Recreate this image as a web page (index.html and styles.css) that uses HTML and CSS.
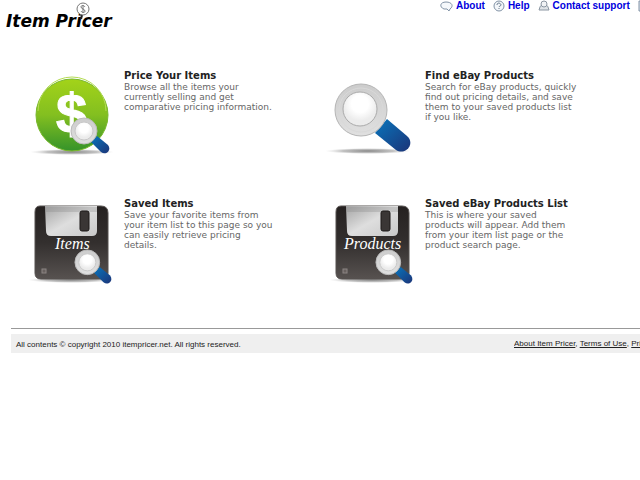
FILE: index.html
```html
<!DOCTYPE html>
<html lang="en">
<head>
    <meta charset="UTF-8">
    <meta name="viewport" content="width=device-width, initial-scale=1.0">
    <title>Item Pricer</title>
    <link rel="stylesheet" href="styles.css">
</head>
<body>
    <!-- shared gradients and symbols -->
    <svg class="defs" width="0" height="0" aria-hidden="true">
        <defs>
            <linearGradient id="green" x1="0" y1="0" x2="0" y2="1">
                <stop offset="0" stop-color="#a3d319"/>
                <stop offset=".5" stop-color="#83bf20"/>
                <stop offset="1" stop-color="#35932a"/>
            </linearGradient>
            <linearGradient id="black" x1="0" y1="0" x2="0" y2="1">
                <stop offset="0" stop-color="#252120"/>
                <stop offset=".5" stop-color="#332f2e"/>
                <stop offset="1" stop-color="#575250"/>
            </linearGradient>
            <linearGradient id="metal" x1="0" y1="0" x2="1" y2="1">
                <stop offset="0" stop-color="#a4a4a4"/>
                <stop offset=".5" stop-color="#dedede"/>
                <stop offset="1" stop-color="#c8c8c8"/>
            </linearGradient>
            <linearGradient id="blue" x1="0" y1="0" x2="1" y2="1">
                <stop offset="0" stop-color="#0876bd"/>
                <stop offset="1" stop-color="#1c3478"/>
            </linearGradient>
            <linearGradient id="ring" x1="0" y1="0" x2="0" y2="1">
                <stop offset="0" stop-color="#cccccc"/>
                <stop offset="1" stop-color="#e0e0e0"/>
            </linearGradient>
            <radialGradient id="lens" cy=".35">
                <stop offset=".5" stop-color="#ffffff"/>
                <stop offset="1" stop-color="#ececec"/>
            </radialGradient>
            <radialGradient id="shade">
                <stop offset="0" stop-color="#777" stop-opacity=".9"/>
                <stop offset=".6" stop-color="#999" stop-opacity=".6"/>
                <stop offset="1" stop-color="#ccc" stop-opacity="0"/>
            </radialGradient>
        </defs>
        <symbol id="glass" viewBox="0 0 40 40">
            <path d="M21 25l6-6 11 9c4 5-2 11-7 7z" fill="url(#blue)"/>
            <circle cx="14" cy="14" r="13" fill="url(#ring)" stroke="#bbb"/>
            <circle cx="14" cy="14" r="9" fill="url(#lens)" stroke="#c8c8c8"/>
        </symbol>
        <symbol id="disk" viewBox="0 0 100 95">
            <ellipse cx="46" cy="85" rx="43" ry="3" fill="url(#shade)"/>
            <path d="M15 11h61q7 0 7 7v60q0 6-6 6H16q-6 0-6-6V17q0-6 5-6z" fill="url(#black)" stroke="#55504e"/>
            <path d="M20 11h52v25q0 5-5 5H26q-5 0-5-5z" fill="url(#metal)"/>
            <path d="M20 12h52v5H21z" fill="#888" opacity=".3"/>
            <rect x="55" y="16" width="9" height="20" rx="2" fill="#3a3635" stroke="#1c1918"/>
            <rect x="17" y="74" width="4" height="4" fill="#68615f" stroke="#8b8583"/>
        </symbol>
    </svg>

    <div class="header">
        <a class="logo" href="#">Item Pricer
            <svg width="14" height="20" viewBox="0 0 14 20" aria-hidden="true">
                <path d="M6 14L5 18" stroke="#222" stroke-width="2"/>
                <circle cx="7" cy="8" r="6" fill="#fff" stroke="#777"/>
                <path d="M9 6C8 4 5 4 5 6s4 2 4 4-3 2-4 0M7 4v8" fill="none" stroke="#777"/>
            </svg>
        </a>
        <div class="nav">
            <a href="#">
                <svg width="13" height="12" viewBox="0 0 13 12" aria-hidden="true"><path d="M4 9C-1 7 0 2 6 2s8 4 4 7l-1 2-2-2z" fill="#f5f8fb" stroke="#8293a6"/></svg>
                About</a>
            <a href="#">
                <svg width="12" height="12" viewBox="0 0 12 12" aria-hidden="true"><circle cx="6" cy="6" r="5" fill="#f4f7fa" stroke="#8293a6"/><path d="M4 5c0-3 4-2 4 0 0 1-2 1-2 2M6 8v1" fill="none" stroke="#66788c"/></svg>
                Help</a>
            <a href="#">
                <svg width="12" height="12" viewBox="0 0 12 12" aria-hidden="true"><path d="M1 10q1-5 3-5h4q2 0 3 5z" fill="#e0e4e8" stroke="#8b96a2"/><circle cx="6" cy="4" r="3" fill="#f1f3f5" stroke="#8b96a2"/></svg>
                Contact support</a>
            <a href="#" aria-label="Account">
                <svg width="12" height="12" viewBox="0 0 12 12" aria-hidden="true"><path d="M1 1h10v10H1z" fill="#d9e3ec" stroke="#8293a6"/></svg>
            </a>
        </div>
    </div>

    <div class="features">
        <div class="feature">
            <svg width="99" height="95" viewBox="0 0 99 95" aria-hidden="true">
                <ellipse cx="47" cy="87" rx="42" ry="3" fill="url(#shade)"/>
                <circle cx="47" cy="50" r="36" fill="url(#green)" stroke="#79b82b"/>
                <path d="M13 46a34 34 0 0 1 68 0" fill="none" stroke="#b5dc55"/>
                <text class="dollar" x="31" y="68">$</text>
                <use href="#glass" x="45" y="52" width="40" height="40"/>
            </svg>
            <div class="text">
                <h2>Price Your Items</h2>
                <p>Browse all the items your<br>currently selling and get<br>comparative pricing information.</p>
            </div>
        </div>
        <div class="feature">
            <svg width="99" height="95" viewBox="6 0 99 95" aria-hidden="true">
                <ellipse cx="48" cy="86" rx="43" ry="3" fill="url(#shade)"/>
                <path d="M55 68l12-14 20 17c9 8-2 20-11 14z" fill="url(#blue)"/>
                <circle cx="41" cy="45" r="26" fill="url(#ring)" stroke="#b5b5b5"/>
                <circle cx="41" cy="45" r="22" fill="none" stroke="#d9d9d9"/>
                <circle cx="40" cy="44" r="17" fill="url(#lens)" stroke="#aaa"/>
            </svg>
            <div class="text">
                <h2>Find eBay Products</h2>
                <p>Search for eBay products, quickly<br>find out pricing details, and save<br>them to your saved products list<br>if you like.</p>
            </div>
        </div>
        <div class="feature">
            <svg width="99" height="95" viewBox="0 -2 99 95" aria-hidden="true">
                <use href="#disk" width="100" height="95"/>
                <text class="label" x="30" y="54">Items</text>
                <use href="#glass" x="49" y="54" width="38" height="38"/>
            </svg>
            <div class="text">
                <h2>Saved Items</h2>
                <p>Save your favorite items from<br>your item list to this page so you<br>can easily retrieve pricing<br>details.</p>
            </div>
        </div>
        <div class="feature">
            <svg width="99" height="95" viewBox="0 -2 99 95" aria-hidden="true">
                <use href="#disk" width="100" height="95"/>
                <text class="label" x="18" y="54">Products</text>
                <use href="#glass" x="49" y="54" width="38" height="38"/>
            </svg>
            <div class="text">
                <h2>Saved eBay Products List</h2>
                <p>This is where your saved<br>products will appear. Add them<br>from your item list page or the<br>product search page.</p>
            </div>
        </div>
    </div>

    <div class="footer">
        <div class="bar">
            <span>All contents © copyright 2010 itempricer.net. All rights reserved.</span>
            <div class="links">
                <a href="#">About Item Pricer</a>, <a href="#">Terms of Use</a>, <a href="#">Privacy Policy</a>
            </div>
        </div>
    </div>
</body>
</html>
```
FILE: styles.css
```css
body {
    margin: 0;
    background-color: white;
    font-family: Verdana, "DejaVu Sans", sans-serif;
    font-size: 9px;
    overflow-x: hidden;
}
.defs {
    position: absolute;
}
.header {
    display: flex;
    justify-content: space-between;
    height: 32px;
    padding-left: 6px;
}
.logo {
    position: relative;
    padding-top: 11px;
    color: black;
    font-size: 17px;
    line-height: 20px;
    font-weight: bold;
    font-style: italic;
    text-decoration: none;
    white-space: nowrap;
}
.logo svg {
    position: absolute;
    left: 70px;
    top: 1px;
}
.nav {
    display: flex;
    gap: 8px;
    width: 200px;
    overflow: hidden;
    white-space: nowrap;
}
.nav a {
    display: flex;
    flex-shrink: 0;
    gap: 3px;
    height: 12px;
    color: #0000dd;
    font-family: Arial, "Liberation Sans", sans-serif;
    font-size: 10px;
    line-height: 12px;
    font-weight: bold;
    text-decoration: none;
}
.features {
    display: grid;
    grid-template-columns: 1fr 1fr;
    grid-auto-rows: 128px;
    padding: 33px 13px 0 25px;
}
.feature {
    display: flex;
}
.feature svg {
    flex-shrink: 0;
}
.text {
    padding-top: 5px;
    white-space: nowrap;
}
.text h2 {
    margin: 0;
    color: #222;
    font-size: 10px;
    line-height: 12px;
}
.text p {
    margin: 0;
    color: #666;
    line-height: 10px;
}
.dollar {
    fill: white;
    stroke: white;
    stroke-width: 1px;
    font-family: Arial, "Liberation Sans", sans-serif;
    font-size: 56px;
    font-weight: bold;
}
.label {
    fill: white;
    font-family: "Liberation Serif", serif;
    font-size: 16px;
    font-style: italic;
}
.footer {
    margin: 7px 0 0 11px;
    padding-top: 5px;
    border-top: 1px solid #999;
}
.bar {
    display: flex;
    justify-content: space-between;
    height: 19px;
    padding-left: 5px;
    background-color: #efefef;
    color: #222;
    font-family: Arial, "Liberation Sans", sans-serif;
    font-size: 8px;
    line-height: 22px;
    white-space: nowrap;
}
.links {
    width: 126px;
    overflow: hidden;
    line-height: 19px;
}
.links a {
    color: #222;
}
```
